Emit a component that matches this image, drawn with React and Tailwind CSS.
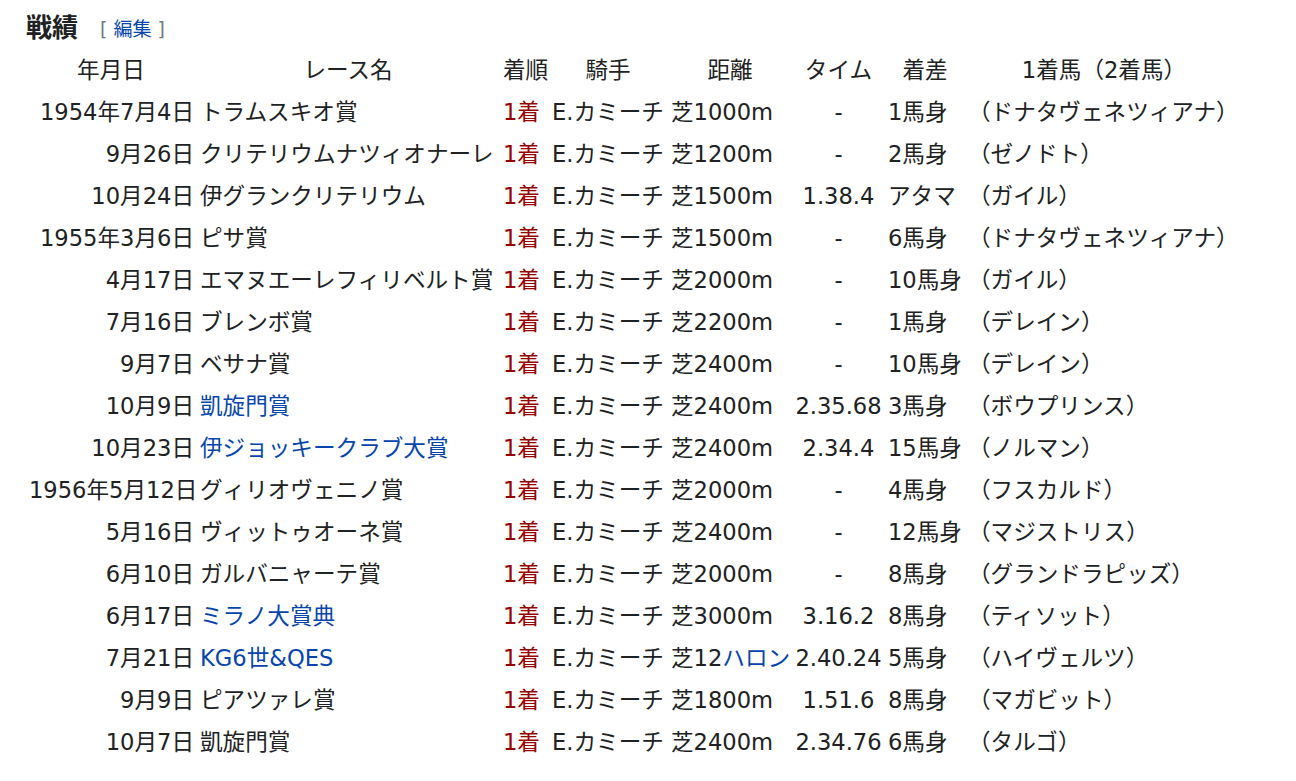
const rows = [
  ["1954年7月4日", "トラムスキオ賞", false, "芝1000m", "-", "1馬身", "（ドナタヴェネツィアナ）"],
  ["9月26日", "クリテリウムナツィオナーレ", false, "芝1200m", "-", "2馬身", "（ゼノドト）"],
  ["10月24日", "伊グランクリテリウム", false, "芝1500m", "1.38.4", "アタマ", "（ガイル）"],
  ["1955年3月6日", "ピサ賞", false, "芝1500m", "-", "6馬身", "（ドナタヴェネツィアナ）"],
  ["4月17日", "エマヌエーレフィリベルト賞", false, "芝2000m", "-", "10馬身", "（ガイル）"],
  ["7月16日", "ブレンボ賞", false, "芝2200m", "-", "1馬身", "（デレイン）"],
  ["9月7日", "ベサナ賞", false, "芝2400m", "-", "10馬身", "（デレイン）"],
  ["10月9日", "凱旋門賞", true, "芝2400m", "2.35.68", "3馬身", "（ボウプリンス）"],
  ["10月23日", "伊ジョッキークラブ大賞", true, "芝2400m", "2.34.4", "15馬身", "（ノルマン）"],
  ["1956年5月12日", "グィリオヴェニノ賞", false, "芝2000m", "-", "4馬身", "（フスカルド）"],
  ["5月16日", "ヴィットゥオーネ賞", false, "芝2400m", "-", "12馬身", "（マジストリス）"],
  ["6月10日", "ガルバニャーテ賞", false, "芝2000m", "-", "8馬身", "（グランドラピッズ）"],
  ["6月17日", "ミラノ大賞典", true, "芝3000m", "3.16.2", "8馬身", "（ティソット）"],
  ["7月21日", "KG6世&QES", true, null, "2.40.24", "5馬身", "（ハイヴェルツ）"],
  ["9月9日", "ピアツァレ賞", false, "芝1800m", "1.51.6", "8馬身", "（マガビット）"],
  ["10月7日", "凱旋門賞", false, "芝2400m", "2.34.76", "6馬身", "（タルゴ）"],
];

const headers = ["年月日", "レース名", "着順", "騎手", "距離", "タイム", "着差", "1着馬（2着馬）"];

export default function App() {
  return (
    <div
      className="min-h-screen bg-white pl-[26px] text-[#202122]"
      style={{ fontFamily: '"DejaVu Sans", "Noto Sans CJK JP", sans-serif' }}
    >
      <div className="flex h-[49px] items-center pt-[8px]">
        <h2 className="text-[26px] font-bold">戦績</h2>
        <span className="ml-[22px] mt-[2px] text-[19px] text-[#72777d]">
          [ <span className="text-[#0645ad]">編集</span> ]
        </span>
      </div>
      <table className="w-[1217px] table-fixed border-collapse text-[22.6px] leading-[42px] whitespace-nowrap">
        <colgroup>
          <col className="w-[170px]" />
          <col className="w-[304px]" />
          <col className="w-[48px]" />
          <col className="w-[120px]" />
          <col className="w-[124px]" />
          <col className="w-[93px]" />
          <col className="w-[80px]" />
          <col className="w-[278px]" />
        </colgroup>
        <thead>
          <tr className="h-[42px]">
            {headers.map((h) => (
              <th key={h} className="px-[3px] text-center font-normal">
                {h}
              </th>
            ))}
          </tr>
        </thead>
        <tbody>
          {rows.map((r, i) => (
            <tr key={i} className="h-[42px]">
              <td className="pr-[2px] pl-[3px] text-right">{r[0]}</td>
              <td className={`px-[4px] text-left ${r[2] ? "text-[#0645ad]" : ""}`}>{r[1]}</td>
              <td className="px-[3px] text-left text-[#990000]">1着</td>
              <td className="px-[4px] text-left">E.カミーチ</td>
              <td className="px-[3px] text-left">
                {r[3] ?? (
                  <>
                    芝12<span className="text-[#0645ad]">ハロン</span>
                  </>
                )}
              </td>
              <td className="px-[2px] text-center">{r[4]}</td>
              <td className="px-[3px] text-left">{r[5]}</td>
              <td className="px-[3px] text-left">{r[6]}</td>
            </tr>
          ))}
        </tbody>
      </table>
    </div>
  );
}
